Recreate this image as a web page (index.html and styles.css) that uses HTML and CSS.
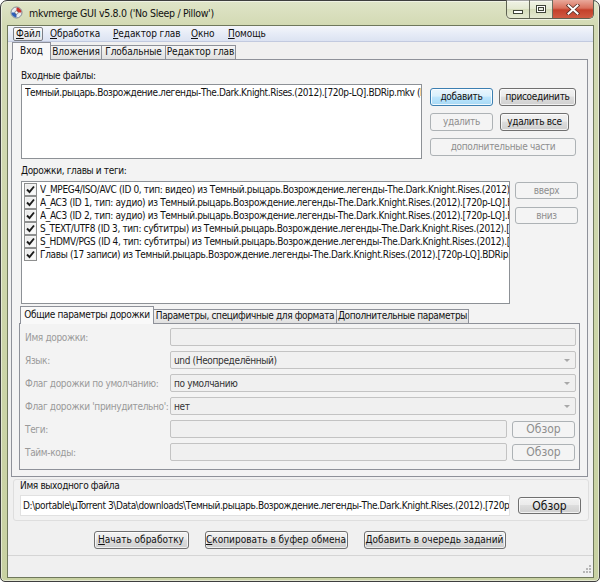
FILE: index.html
```html
<!DOCTYPE html>
<html lang="ru">
<head>
<meta charset="utf-8">
<title>mkvmerge GUI</title>
<link rel="stylesheet" href="styles.css">
</head>
<body>
<div class="window">
  <div class="titlebar">
    <svg class="appicon" viewBox="0 0 13 13" width="13" height="13">
      <circle cx="6.5" cy="6.5" r="5.5" fill="#e8ecef" stroke="#7d8790" stroke-width="1"/>
      <path d="M6.5 1.5 A5 5 0 0 1 11.5 6.5 L6.5 6.5 Z" fill="#c9302c"/>
      <path d="M1.5 6.5 A5 5 0 0 0 6.5 11.5 L6.5 6.5 Z" fill="#2e5fb8"/>
      <circle cx="6.5" cy="6.5" r="1.6" fill="#fff" stroke="#555" stroke-width="0.6"/>
    </svg>
    <span class="title">mkvmerge GUI v5.8.0 ('No Sleep / Pillow')</span>
    <div class="caption">
      <div class="cbtn cmin"><span class="minbar"></span></div>
      <div class="cbtn cmax"><span class="maxbox"></span></div>
      <div class="cbtn cclose">
        <svg viewBox="0 0 14 11" width="14" height="11">
          <path d="M2.5 1.5 L11.5 9.5 M11.5 1.5 L2.5 9.5" stroke="#5a3028" stroke-width="3.6" stroke-linecap="square"/>
          <path d="M2.5 1.5 L11.5 9.5 M11.5 1.5 L2.5 9.5" stroke="#ffffff" stroke-width="2" stroke-linecap="square"/>
        </svg>
      </div>
    </div>
  </div>

  <div class="client">
    <div class="menubar">
      <span class="mi mi-file"><u>Ф</u>айл</span>
      <span class="mi mi-proc"><u>О</u>бработка</span>
      <span class="mi mi-chap"><u>Р</u>едактор глав</span>
      <span class="mi mi-win"><u>О</u>кно</span>
      <span class="mi mi-help"><u>П</u>омощь</span>
    </div>

    <div class="main">
      <div class="nb outer">
        <div class="tabs otabs">
          <div class="tab on t-in">Вход</div>
          <div class="tab t-att">Вложения</div>
          <div class="tab t-glob">Глобальные</div>
          <div class="tab t-ced">Редактор глав</div>
        </div>
        <div class="pane outer-pane">
          <div class="lbl">Входные файлы:</div>
          <div class="files-row">
            <div class="listbox filelist">
              <div class="fline">Темный.рыцарь.Возрождение.легенды-The.Dark.Knight.Rises.(2012).[720p-LQ].BDRip.mkv (D:\portable\µTorrent 3\Data\downloads)</div>
            </div>
            <div class="btncol">
              <div class="brow">
                <button class="btn def w-add">добавить</button>
                <button class="btn w-app">присоединить</button>
              </div>
              <div class="brow">
                <button class="btn dis w-add">удалить</button>
                <button class="btn w-rmall">удалить все</button>
              </div>
              <div class="brow">
                <button class="btn dis w-parts">дополнительные части</button>
              </div>
            </div>
          </div>

          <div class="lbl lbl-tracks">Дорожки, главы и теги:</div>
          <div class="tracks-row">
            <div class="listbox tracklist">
              <div class="trow"><span class="cb"><svg viewBox="0 0 11 11" width="11" height="11"><path d="M2 5.5 L4.5 8 L9 2.5" fill="none" stroke="#1c1c1c" stroke-width="1.9"/></svg></span><span class="ttext">V_MPEG4/ISO/AVC (ID 0, тип: видео) из Темный.рыцарь.Возрождение.легенды-The.Dark.Knight.Rises.(2012).[720p-LQ].BDRip.mkv</span></div>
              <div class="trow"><span class="cb"><svg viewBox="0 0 11 11" width="11" height="11"><path d="M2 5.5 L4.5 8 L9 2.5" fill="none" stroke="#1c1c1c" stroke-width="1.9"/></svg></span><span class="ttext">A_AC3 (ID 1, тип: аудио) из Темный.рыцарь.Возрождение.легенды-The.Dark.Knight.Rises.(2012).[720p-LQ].BDRip.mkv</span></div>
              <div class="trow"><span class="cb"><svg viewBox="0 0 11 11" width="11" height="11"><path d="M2 5.5 L4.5 8 L9 2.5" fill="none" stroke="#1c1c1c" stroke-width="1.9"/></svg></span><span class="ttext">A_AC3 (ID 2, тип: аудио) из Темный.рыцарь.Возрождение.легенды-The.Dark.Knight.Rises.(2012).[720p-LQ].BDRip.mkv</span></div>
              <div class="trow"><span class="cb"><svg viewBox="0 0 11 11" width="11" height="11"><path d="M2 5.5 L4.5 8 L9 2.5" fill="none" stroke="#1c1c1c" stroke-width="1.9"/></svg></span><span class="ttext">S_TEXT/UTF8 (ID 3, тип: субтитры) из Темный.рыцарь.Возрождение.легенды-The.Dark.Knight.Rises.(2012).[720p-LQ].BDRip.mkv</span></div>
              <div class="trow"><span class="cb"><svg viewBox="0 0 11 11" width="11" height="11"><path d="M2 5.5 L4.5 8 L9 2.5" fill="none" stroke="#1c1c1c" stroke-width="1.9"/></svg></span><span class="ttext">S_HDMV/PGS (ID 4, тип: субтитры) из Темный.рыцарь.Возрождение.легенды-The.Dark.Knight.Rises.(2012).[720p-LQ].BDRip.mkv</span></div>
              <div class="trow"><span class="cb"><svg viewBox="0 0 11 11" width="11" height="11"><path d="M2 5.5 L4.5 8 L9 2.5" fill="none" stroke="#1c1c1c" stroke-width="1.9"/></svg></span><span class="ttext">Главы (17 записи) из Темный.рыцарь.Возрождение.легенды-The.Dark.Knight.Rises.(2012).[720p-LQ].BDRip.mkv</span></div>
            </div>
            <div class="updown">
              <button class="btn dis w-ud">вверх</button>
              <button class="btn dis w-ud">вниз</button>
            </div>
          </div>

          <div class="nb inner">
            <div class="tabs itabs">
              <div class="tab on it-gen">Общие параметры дорожки</div>
              <div class="tab it-fmt">Параметры, специфичные для формата</div>
              <div class="tab it-ext">Дополнительные параметры</div>
            </div>
            <div class="pane inner-pane">
              <div class="frow">
                <span class="flbl">Имя дорожки:</span>
                <div class="field"></div>
              </div>
              <div class="frow">
                <span class="flbl">Язык:</span>
                <div class="field combo"><span class="cval">und (Неопределённый)</span><span class="arrow"></span></div>
              </div>
              <div class="frow">
                <span class="flbl">Флаг дорожки по умолчанию:</span>
                <div class="field combo"><span class="cval">по умолчанию</span><span class="arrow"></span></div>
              </div>
              <div class="frow">
                <span class="flbl">Флаг дорожки 'принудительно':</span>
                <div class="field combo"><span class="cval">нет</span><span class="arrow"></span></div>
              </div>
              <div class="frow frow-gap">
                <span class="flbl">Теги:</span>
                <div class="field short"></div>
                <button class="btn dis w-browse">Обзор</button>
              </div>
              <div class="frow frow-gap">
                <span class="flbl">Тайм-коды:</span>
                <div class="field short"></div>
                <button class="btn dis w-browse">Обзор</button>
              </div>
            </div>
          </div>
        </div>
      </div>

      <div class="outgroup">
        <div class="glbl">Имя выходного файла</div>
        <div class="outrow">
          <div class="outfield"><span class="otext">D:\portable\µTorrent 3\Data\downloads\Темный.рыцарь.Возрождение.легенды-The.Dark.Knight.Rises.(2012).[720p-LQ].BDRip.mkv</span></div>
          <button class="btn w-browse2">Обзор</button>
        </div>
      </div>

      <div class="actions">
        <button class="btn act w-start"><u>Н</u>ачать обработку</button>
        <button class="btn act w-copy"><u>С</u>копировать в буфер обмена</button>
        <button class="btn act w-queue"><u>Д</u>обавить в очередь заданий</button>
      </div>
    </div>

    <div class="statusbar">
      <svg class="grip" viewBox="0 0 11 11" width="11" height="11">
        <g fill="#b7b7b7">
          <rect x="8" y="0" width="2" height="2"/>
          <rect x="5" y="3" width="2" height="2"/><rect x="8" y="3" width="2" height="2"/>
          <rect x="2" y="6" width="2" height="2"/><rect x="5" y="6" width="2" height="2"/><rect x="8" y="6" width="2" height="2"/>
        </g>
      </svg>
    </div>
  </div>
</div>
</body>
</html>
```

FILE: styles.css
```css
* { box-sizing: border-box; }
html, body { margin: 0; padding: 0; }
body {
  width: 600px;
  height: 582px;
  overflow: hidden;
  background: #ffffff;
  font-family: "DejaVu Sans Condensed", "DejaVu Sans", sans-serif;
  font-stretch: condensed;
  font-size: 10px;
  letter-spacing: -0.35px;
  color: #000;
}

/* ---------- window frame ---------- */
.window {
  width: 600px;
  height: 582px;
  border: 1px solid #3e3e3e;
  border-radius: 7px 7px 5px 5px;
  background: linear-gradient(to bottom, #dfe5c8 0, #d3dab4 24px, #ccd5a8 60%, #c8d1a2 100%);
  box-shadow: inset 0 0 0 1px rgba(255,255,255,0.5);
  padding: 0 5px 3px 6px;
  display: flex;
  flex-direction: column;
}
.titlebar {
  height: 24px;
  flex: none;
  display: flex;
  align-items: flex-start;
}
.appicon { margin: 5px 0 0 3px; flex: none; }
.title {
  font-size: 10.5px;
  letter-spacing: -0.3px;
  line-height: 14px;
  margin: 5px 0 0 6px;
  color: #111;
}
.caption {
  margin-left: auto;
  margin-top: -1px;
  height: 19px;
  display: flex;
  border: 1px solid #5e6152;
  border-top: none;
  border-radius: 0 0 5px 5px;
  overflow: hidden;
  box-shadow: 0 1px 0 rgba(255,255,255,0.6);
}
.cbtn {
  height: 18px;
  display: flex;
  align-items: center;
  justify-content: center;
}
.cmin, .cmax {
  width: 23px;
  background: linear-gradient(to bottom, rgba(255,255,255,0.55), rgba(255,255,255,0.25) 50%, rgba(200,208,170,0.3) 51%, rgba(255,255,255,0.35));
  border-right: 1px solid #6b6e5f;
}
.cclose {
  width: 40px;
  background: linear-gradient(to bottom, #e9a99b 0, #d9705c 45%, #c4402b 55%, #cf5a42 100%);
}
.minbar {
  width: 10px;
  height: 4px;
  margin-top: 5px;
  background: #fff;
  border: 1px solid #3f4338;
}
.maxbox {
  width: 10px;
  height: 8px;
  border: 1px solid #3f4338;
  box-shadow: inset 0 0 0 1px #fff, inset 0 0 0 2px #3f4338;
  background: #e8ebe0;
}

/* ---------- client ---------- */
.client {
  flex: 1;
  display: flex;
  flex-direction: column;
  border: 1px solid #6f785c;
  background: #f0f0f0;
  min-height: 0;
}
.menubar {
  height: 16px;
  flex: none;
  display: flex;
  align-items: center;
  padding-left: 5px;
  background: linear-gradient(to bottom, #f4f6fb 0, #e7ecf7 50%, #dce3f2 100%);
  border-bottom: 1px solid #c2cadf;
  font-size: 10px;
  letter-spacing: -0.1px;
}
.mi {
  display: block;
  height: 14px;
  line-height: 13px;
  padding-left: 7px;
  white-space: nowrap;
  color: #111;
}
.mi u { text-decoration: underline; text-underline-offset: 1px; }
.mi-file {
  width: 30px;
  height: 14px;
  padding-left: 2px;
  border: 1px solid #7c7f86;
  border-radius: 2px;
  background: linear-gradient(to bottom, #fbfbfb, #e4e6ea);
  line-height: 12px;
}
.mi-proc { width: 63px; }
.mi-chap { width: 78px; }
.mi-win { width: 37px; }
.mi-help { width: 60px; }

.main {
  flex: 1;
  display: flex;
  flex-direction: column;
  min-height: 0;
}

/* ---------- notebooks ---------- */
.tabs {
  display: flex;
  align-items: flex-end;
  height: 17px;
  position: relative;
  z-index: 1;
}
.tab {
  height: 14px;
  border: 1px solid #8e9199;
  border-bottom: none;
  margin-right: -1px;
  background: linear-gradient(to bottom, #f5f5f5 0, #ebebeb 50%, #e0e0e0 100%);
  line-height: 12px;
  text-align: center;
  white-space: nowrap;
  overflow: hidden;
  color: #111;
}
.tab.on {
  height: 18px;
  margin-bottom: -1px;
  background: #f9f9f9;
  line-height: 15px;
  position: relative;
  z-index: 2;
}
.otabs { font-size: 10px; letter-spacing: -0.1px; }
.outer { margin: 0 5px 0 3px; flex: none; }
.outer .tabs { padding-left: 1px; }
.t-in { width: 39px; }
.t-att { width: 52px; }
.t-glob { width: 65px; }
.t-ced { width: 71px; }

.pane {
  border: 1px solid #8e9199;
  background: #f3f3f3;
}
.outer-pane {
  height: 418px;
  padding: 9px 0 0 9px;
}

.lbl {
  height: 13px;
  line-height: 13px;
  margin-bottom: 2px;
  color: #111;
}
.lbl-tracks { margin-top: 5px; margin-bottom: 4px; }

.listbox {
  background: #fff;
  border: 1px solid #8d9196;
  overflow: hidden;
}
.files-row { display: flex; height: 75px; }
.filelist { width: 401px; height: 75px; padding: 1px 0 0 3px; }
.fline {
  white-space: nowrap;
  overflow: hidden;
  text-overflow: clip;
  line-height: 13px;
  color: #111;
  letter-spacing: -0.4px;
}

.btncol {
  margin-left: 8px;
  padding-top: 4px;
  display: flex;
  flex-direction: column;
  gap: 7px;
}
.brow { display: flex; gap: 6px; }

.btn {
  font-family: inherit;
  font-stretch: condensed;
  font-size: 10px;
  letter-spacing: -0.3px;
  height: 18px;
  padding: 0;
  margin: 0;
  border: 1px solid #707070;
  border-radius: 3px;
  background: linear-gradient(to bottom, #f2f2f2 0, #ebebeb 45%, #dddddd 50%, #cfcfcf 100%);
  box-shadow: inset 0 0 0 1px rgba(255,255,255,0.7);
  color: #111;
  line-height: 14px;
  white-space: nowrap;
  text-align: center;
}
.btn u { text-underline-offset: 1px; }
.btn.def {
  border-color: #3c7fb1;
  background: linear-gradient(to bottom, #eaf6fd 0, #d9f0fc 45%, #bee6fd 50%, #a7d9f5 100%);
  box-shadow: inset 0 0 0 1px rgba(255,255,255,0.8);
}
.btn.dis {
  border-color: #adb2b5;
  background: #f4f4f4;
  box-shadow: none;
  color: #8e8e8e;
}
.btn.act { font-size: 10px; letter-spacing: 0; }
.w-add { width: 63px; }
.w-app { width: 77px; }
.w-rmall { width: 69px; margin-left: 1px; }
.w-parts { width: 146px; }

.tracks-row { display: flex; height: 123px; }
.tracklist { width: 489px; height: 123px; padding: 1px 0 0 2px; }
.trow {
  display: flex;
  align-items: center;
  height: 13px;
  white-space: nowrap;
  overflow: hidden;
}
.cb {
  flex: none;
  width: 13px;
  height: 13px;
  border: 1px solid #8e8f8f;
  background: linear-gradient(135deg, #e6e6e6, #ffffff);
  box-shadow: inset 0 0 0 1px #f4f4f4;
  display: flex;
  align-items: center;
  justify-content: center;
  margin-right: 3px;
}
.cb svg { display: block; }
.ttext {
  line-height: 13px;
  color: #111;
  min-width: 0;
  overflow: hidden;
  text-overflow: clip;
}
.updown {
  margin-left: 5px;
  padding-top: 1px;
  display: flex;
  flex-direction: column;
  gap: 8px;
}
.w-ud { width: 63px; height: 17px; }

.inner { margin: 2px 7px 0 -2px; }
.itabs { padding-left: 1px; }
.it-gen { width: 134px; }
.it-fmt { width: 184px; }
.it-ext { width: 133px; }
.inner-pane {
  height: 147px;
  padding: 4px 3px 0 5px;
  background: #f3f3f3;
}
.frow {
  display: flex;
  align-items: center;
  height: 18px;
  margin-bottom: 5px;
}
.frow-gap { margin-top: 1px; margin-bottom: 5px; }
.flbl {
  width: 145px;
  flex: none;
  color: #9a9a9a;
  white-space: nowrap;
}
.field {
  flex: 1;
  height: 18px;
  border: 1px solid #c3c3c3;
  border-radius: 2px;
  background: #f0f0f0;
  display: flex;
  align-items: center;
}
.field.short { flex: none; width: 337px; }
.combo { padding-left: 3px; }
.cval { flex: 1; color: #333; white-space: nowrap; }
.arrow {
  width: 0;
  height: 0;
  border-left: 3px solid transparent;
  border-right: 3px solid transparent;
  border-top: 3px solid #a8a8a8;
  margin-right: 5px;
}
.w-browse { width: 63px; height: 17px; margin-left: 5px; font-size: 12px; letter-spacing: 0; }

/* ---------- output group ---------- */
.outgroup {
  margin: 2px 4px 0 5px;
  height: 42px;
  border: 1px solid #dedede;
  border-radius: 3px;
  background: #f2f2f2;
  padding: 0 0 0 6px;
  flex: none;
}
.glbl {
  height: 13px;
  line-height: 12px;
  color: #111;
  margin-top: 0;
}
.outrow { display: flex; align-items: center; margin-top: 2px; }
.outfield {
  width: 490px;
  height: 21px;
  background: #fff;
  border: 1px solid #e1e1e1;
  padding-left: 2px;
  line-height: 19px;
  white-space: nowrap;
  overflow: hidden;
  color: #111;
  letter-spacing: -0.4px;
  display: flex;
}
.otext { min-width: 0; overflow: hidden; text-overflow: clip; }
.w-browse2 { width: 63px; height: 17px; margin-left: 8px; font-size: 12px; letter-spacing: 0; }

.actions {
  display: flex;
  justify-content: center;
  gap: 16px;
  margin-top: 10px;
  padding-right: 2px;
}
.w-start { width: 95px; }
.w-copy { width: 143px; }
.w-queue { width: 142px; }

/* ---------- status bar ---------- */
.statusbar {
  height: 22px;
  flex: none;
  border-top: 1px solid #d5d5d5;
  background: #f0f0f0;
  display: flex;
  justify-content: flex-end;
  align-items: flex-end;
  padding: 0 1px 1px 0;
}
.grip { display: block; }
```
